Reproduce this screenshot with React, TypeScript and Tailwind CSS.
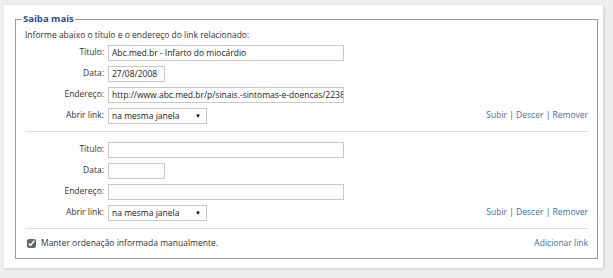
import React from 'react';

const font = { fontFamily: '"Open Sans", "Noto Sans", sans-serif' };

function Row({ label, children }: { label: string; children: React.ReactNode }) {
  return (
    <div className="flex items-center h-[21px]">
      <span className="w-[83px] text-right pr-[4px] text-[#333]">{label}</span>
      {children}
    </div>
  );
}

function Input({ value, w }: { value?: string; w: string }) {
  return (
    <div
      className={`${w} h-[16px] border border-[#c8c8c8] bg-white px-[3px] leading-[14px] overflow-hidden whitespace-nowrap text-[#222]`}
    >
      {value}
    </div>
  );
}

function Select() {
  return (
    <div className="w-[99px] h-[16px] border border-[#c8c8c8] bg-white pl-[3px] pr-[5px] flex items-center justify-between leading-[14px] whitespace-nowrap text-[#222]">
      <span>na mesma janela</span>
      <span className="text-[6px] text-black">▼</span>
    </div>
  );
}

function Actions() {
  return (
    <div className="text-[#3d6fa8] whitespace-nowrap">
      Subir <span className="text-[#555]">|</span> Descer <span className="text-[#555]">|</span> Remover
    </div>
  );
}

function LinkBlock({ titulo, data, endereco }: { titulo?: string; data?: string; endereco?: string }) {
  return (
    <div className="flex flex-col">
      <Row label="Título:">
        <Input value={titulo} w="w-[236px]" />
      </Row>
      <Row label="Data:">
        <Input value={data} w="w-[57px]" />
      </Row>
      <Row label="Endereço:">
        <Input value={endereco} w="w-[236px]" />
      </Row>
      <div className="flex items-center justify-between h-[21px]">
        <div className="flex items-center">
          <span className="w-[83px] text-right pr-[4px] text-[#333]">Abrir link:</span>
          <Select />
        </div>
        <Actions />
      </div>
    </div>
  );
}

export default function App() {
  return (
    <div className="w-[613px] h-[278px] bg-[#eeeeee] pt-[5px] pl-[4px]" style={font}>
      <div className="w-[599px] h-[263px] bg-white shadow-[1px_1px_3px_rgba(0,0,0,0.15)] pt-[8px] pl-[11px]">
        <fieldset className="w-[583px] h-[246px] border border-[#9a9a9a] pl-[9px] pr-[9px] pb-[6px] text-[8.5px]">
          <legend className="px-[1px] ml-[-3px] font-bold text-[#1d4e96] text-[9.5px] leading-[12px]">Saiba mais</legend>
          <div className="h-[14px] flex items-center mt-[3px] text-[#333]">
            Informe abaixo o título e o endereço do link relacionado:
          </div>
          <LinkBlock
            titulo="Abc.med.br - Infarto do miocárdio"
            data="27/08/2008"
            endereco="http://www.abc.med.br/p/sinais.-sintomas-e-doencas/223859"
          />
          <div className="border-t border-[#dcdcdc] mt-[5px] mb-[7px]" />
          <LinkBlock />
          <div className="border-t border-[#dcdcdc] mt-[5px]" />
          <div className="flex items-center justify-between h-[29px]">
            <label className="flex items-center gap-[5px] text-[#333]">
              <input type="checkbox" defaultChecked className="w-[9px] h-[9px] ml-[2px] accent-[#666]" />
              Manter ordenação informada manualmente.
            </label>
            <span className="text-[#3d6fa8]">Adicionar link</span>
          </div>
        </fieldset>
      </div>
    </div>
  );
}
